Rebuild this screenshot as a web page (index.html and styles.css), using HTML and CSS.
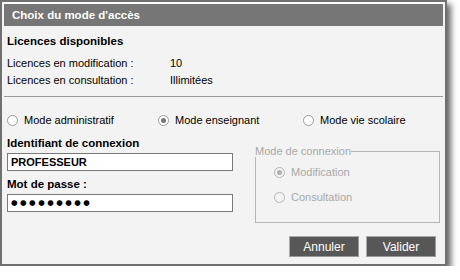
FILE: index.html
```html
<!DOCTYPE html>
<html lang="fr">
<head>
  <meta charset="UTF-8" />
  <title>Choix du mode d'accès</title>
  <link rel="stylesheet" href="styles.css">
</head>
<body>
  <div class="window">
    <div class="titlebar">Choix du mode d'accès</div>
    <div class="content">
      <section class="licences">
        <h2>Licences disponibles</h2>
        <div class="row"><span class="label">Licences en modification :</span><span>10</span></div>
        <div class="row"><span class="label">Licences en consultation :</span><span>Illimitées</span></div>
      </section>

      <div class="modes">
        <label class="radio"><span class="dot"></span>Mode administratif</label>
        <label class="radio checked"><span class="dot"></span>Mode enseignant</label>
        <label class="radio"><span class="dot"></span>Mode vie scolaire</label>
      </div>

      <div class="login">
        <div class="fields">
          <div class="field-label">Identifiant de connexion</div>
          <div class="input">PROFESSEUR</div>
          <div class="field-label">Mot de passe :</div>
          <div class="input pass">●●●●●●●●●</div>
        </div>
        <fieldset class="connexion">
          <legend>Mode de connexion</legend>
          <label class="radio checked disabled"><span class="dot"></span>Modification</label>
          <label class="radio disabled"><span class="dot"></span>Consultation</label>
        </fieldset>
      </div>

      <div class="buttons">
        <button>Annuler</button>
        <button>Valider</button>
      </div>
    </div>
  </div>
</body>
</html>
```

FILE: styles.css
```css
body {
  margin: 0;
  background: #fff;
  font-family: 'Liberation Sans', Arial, sans-serif;
  font-size: 11px;
  color: #000;
}

.window {
  width: 441px;
  height: 260px;
  border: 2px solid #707070;
  padding: 2px 0 0 2px;
  box-sizing: content-box;
  background: #f3f3f3;
  box-shadow: 4px 4px 6px rgba(0, 0, 0, 0.6);
  position: relative;
  overflow: hidden;
}

.window::before {
  content: "";
  position: absolute;
  top: 0;
  left: 0;
  width: 441px;
  height: 2px;
  background: #fff;
}

.titlebar {
  width: 439px;
  height: 22px;
  background: #767676;
  color: #fff;
  font-weight: bold;
  font-size: 11.5px;
  line-height: 22px;
  padding-left: 8px;
  box-sizing: border-box;
}

.content {
  width: 441px;
}

.licences {
  padding: 8px 0 0 3px;
  height: 62px;
  border-bottom: 1px solid #9a9a9a;
  margin-right: 2px;
}

.licences h2 {
  margin: 0 0 7px;
  font-size: 11.5px;
  line-height: 14px;
}

.row {
  display: flex;
  line-height: 17px;
}

.row .label {
  width: 163px;
}

.modes {
  display: flex;
  padding: 15px 0 0 3px;
  height: 16px;
}

.radio {
  display: flex;
  align-items: center;
  gap: 6px;
  line-height: 16px;
}

.modes .radio:nth-child(1) { width: 151px; }
.modes .radio:nth-child(2) { width: 145px; }

.dot {
  width: 9px;
  height: 9px;
  border: 1px solid #9a9a9a;
  border-radius: 50%;
  background: #fff;
  position: relative;
}

.checked .dot::after {
  content: "";
  position: absolute;
  left: 2px;
  top: 2px;
  width: 5px;
  height: 5px;
  border-radius: 50%;
  background: #777;
}

.login {
  display: flex;
  padding: 8px 0 0 3px;
}

.fields {
  width: 226px;
}

.field-label {
  font-weight: bold;
  font-size: 11.5px;
  line-height: 14px;
  margin-bottom: 3px;
}

.input {
  height: 18px;
  border: 1px solid #7a7a7a;
  background: #fff;
  font-weight: bold;
  font-size: 11px;
  line-height: 16px;
  padding-left: 3px;
  box-sizing: border-box;
  margin-bottom: 6px;
}

.input.pass {
  font-family: 'DejaVu Sans', sans-serif;
  font-size: 7.5px;
  letter-spacing: 2.5px;
  padding-left: 3px;
}

.connexion {
  margin: 9px 0 0 22px;
  padding: 7px 0 0 18px;
  width: 185px;
  height: 78px;
  box-sizing: border-box;
  border: 1px solid #b5b5b5;
}

.connexion legend {
  color: #a8a8a8;
  padding: 0;
  margin-left: -19px;
  font-size: 11px;
}

.connexion .radio {
  color: #a8a8a8;
  margin-bottom: 9px;
}

.connexion .dot {
  border-color: #b5b5b5;
  background: #f3f3f3;
}

.connexion .checked .dot::after {
  background: #b0b0b0;
}

.buttons {
  display: flex;
  justify-content: flex-end;
  gap: 7px;
  padding: 13px 9px 0 0;
}

.buttons button {
  width: 70px;
  height: 21px;
  background: #575757;
  color: #fff;
  border: 1px solid #999;
  border-top-color: #aaa;
  border-left-color: #aaa;
  font-family: 'Liberation Sans', Arial, sans-serif;
  font-size: 12px;
  padding: 0;
}
```
